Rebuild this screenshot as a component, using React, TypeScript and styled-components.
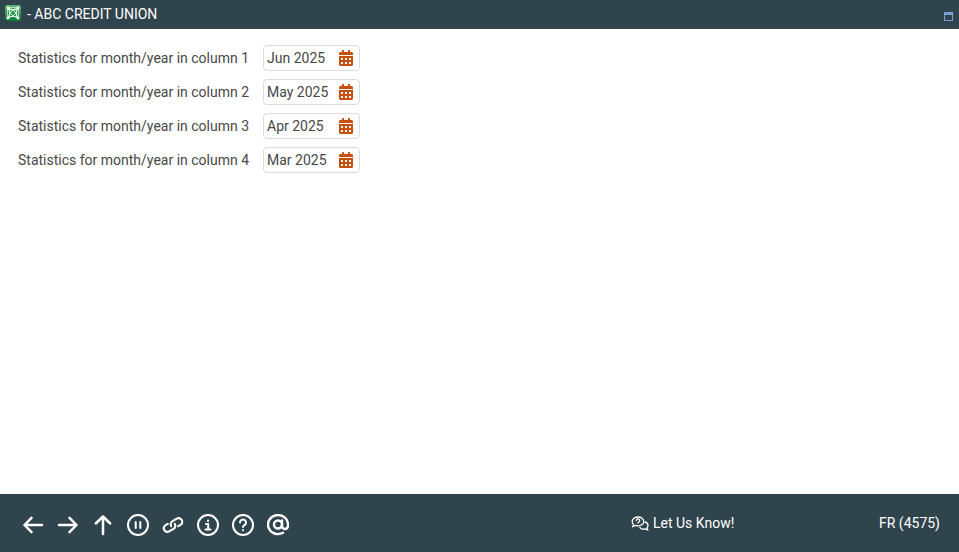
import React, { FC } from "react";
import styled, { createGlobalStyle } from "styled-components";
import { FaCalendarAlt } from "react-icons/fa";

const GlobalStyle = createGlobalStyle`
  html, body { margin: 0; padding: 0; height: 100%; background: #fff; }
  #root { height: 100%; }
  * { box-sizing: border-box; }
`;

const Page = styled.div`
  height: 552px;
  display: flex;
  flex-direction: column;
  font-family: Roboto, "Liberation Sans", sans-serif;
  overflow: hidden;
`;

const TitleBar = styled.header`
  height: 29px;
  flex: none;
  background: #30444e;
  color: #fff;
  display: flex;
  align-items: center;
  padding: 0 6px 2px 5px;
  font-size: 14px;
  font-weight: 400;
`;

const LogoMark = styled.svg`
  width: 16px;
  height: 16px;
  margin-bottom: 2px;
`;

const TitleText = styled.span`
  margin-left: 6px;
  flex: 1;
`;

const WindowButton = styled.span`
  width: 9px;
  height: 9px;
  margin: 6px 0 0;
  border: 1px solid #7f9fd0;
  border-top-width: 3px;
`;

const Content = styled.main`
  flex: 1;
  padding: 16px 18px;
  display: flex;
  flex-direction: column;
  gap: 8px;
`;

const Row = styled.div`
  display: flex;
  align-items: center;
  height: 26px;
`;

const Label = styled.label`
  width: 245px;
  font-size: 14px;
  color: #474747;
`;

const DateField = styled.div`
  width: 97px;
  height: 26px;
  border: 1px solid #dcdcdc;
  border-radius: 4px;
  display: flex;
  align-items: center;
  justify-content: space-between;
  padding: 0 6px 0 3px;
  font-size: 14px;
  color: #474747;
  svg { color: #c8500f; width: 14px; height: 16px; }
`;

const Footer = styled.footer`
  height: 58px;
  flex: none;
  background: #30444e;
  color: #fff;
  display: flex;
  align-items: center;
  padding: 0 19px 0 22px;
  font-size: 14px;
  font-weight: 400;
`;

const Tools = styled.nav`
  display: flex;
  gap: 13px;
  width: 609px;
  margin-top: 4px;
`;

const ToolIcon = styled.svg<{ $weight?: number }>`
  width: 22px;
  height: 22px;
  fill: none;
  stroke: #fff;
  stroke-width: ${(p) => p.$weight ?? 2};
  stroke-linecap: round;
  stroke-linejoin: round;
`;

const Feedback = styled.div`
  display: flex;
  align-items: center;
  gap: 4px;
  flex: 1;
  svg { width: 18px; height: 15px; fill: none; stroke: #fff; stroke-width: 1.3; stroke-linecap: round; }
`;

const User = styled.span``;

const rows = [
  ["Statistics for month/year in column 1", "Jun 2025"],
  ["Statistics for month/year in column 2", "May 2025"],
  ["Statistics for month/year in column 3", "Apr 2025"],
  ["Statistics for month/year in column 4", "Mar 2025"],
];

const Logo = () => (
  <LogoMark viewBox="0 0 16 16" aria-hidden="true">
    <defs>
      <linearGradient id="lg" x1="0" y1="0" x2="0" y2="1">
        <stop offset="0" stopColor="#58b872" />
        <stop offset="1" stopColor="#0b7a35" />
      </linearGradient>
    </defs>
    <rect width="16" height="16" rx="2" fill="url(#lg)" />
    <g stroke="#f0faf2" strokeWidth="1.100" fill="none">
      <path d="M3 3 Q8 6.500 13 3 Q9.500 8 13 13 Q8 9.500 3 13 Q6.500 8 3 3Z" />
      <path d="M3 3 Q1.500 8 3 13 M13 3 Q14.500 8 13 13 M3 3 Q8 1.500 13 3" strokeWidth="0.700" />
      <path d="M8 5 L11 8 L8 11 L5 8Z" strokeWidth="0.800" />
    </g>
    <g fill="#ffffff">
      <circle cx="3" cy="3" r="1.400" />
      <circle cx="13" cy="3" r="1.400" />
      <circle cx="3" cy="13" r="1.400" />
      <circle cx="13" cy="13" r="1.400" />
    </g>
  </LogoMark>
);

const App: FC = () => (
  <Page>
    <GlobalStyle />
    <TitleBar>
      <Logo />
      <TitleText>- ABC CREDIT UNION</TitleText>
      <WindowButton />
    </TitleBar>
    <Content>
      {rows.map(([label, value]) => (
        <Row key={label}>
          <Label>{label}</Label>
          <DateField>
            {value}
            <FaCalendarAlt />
          </DateField>
        </Row>
      ))}
    </Content>
    <Footer>
      <Tools>
        <ToolIcon $weight={2.5} viewBox="0 0 22 22"><path d="M20 11H2.500M9.500 3.800L2.500 11l7 7.200" /></ToolIcon>
        <ToolIcon $weight={2.5} viewBox="0 0 22 22"><path d="M2 11h17.500M12.500 3.800l7 7.200-7 7.200" /></ToolIcon>
        <ToolIcon $weight={2.5} viewBox="0 0 22 22"><path d="M11 20V2.500M3.800 9.500L11 2.500l7.200 7" /></ToolIcon>
        <ToolIcon viewBox="0 0 22 22"><circle cx="11" cy="11" r="10" /><path d="M8.700 8v6M13.300 8v6" /></ToolIcon>
        <ToolIcon $weight={2.2} viewBox="0 0 22 22">
          <g transform="rotate(-30 11 11)">
            <path d="M7 7.400H4.500a3.600 3.600 0 0 0 0 7.200h5a3.600 3.600 0 0 0 3.600-3.600" />
            <path d="M15 14.600h2.500a3.600 3.600 0 0 0 0-7.200h-5a3.600 3.600 0 0 0-3.600 3.600" />
          </g>
        </ToolIcon>
        <ToolIcon viewBox="0 0 22 22"><circle cx="11" cy="11" r="10" /><path d="M9 10h2.200v5M8.500 15.500h5M11 6.500v.5" /></ToolIcon>
        <ToolIcon viewBox="0 0 22 22"><circle cx="11" cy="11" r="10" /><path d="M8 8.500a3 3 0 1 1 4.500 2.600c-1 .6-1.500 1-1.500 2M11 16v.3" /></ToolIcon>
        <ToolIcon $weight={2.4} viewBox="0 0 22 22"><circle cx="11" cy="10.500" r="4" /><path d="M15 6.500v5.500a3 3 0 0 0 6 0v-1.500a10 9.500 0 1 0-5 8.300" /></ToolIcon>
      </Tools>
      <Feedback>
        <svg viewBox="0 0 18 15" aria-hidden="true">
          <path d="M7 1c-3.200 0-5.800 2-5.800 4.500 0 1.100.5 2.100 1.300 2.900L1.800 10.500l2.600-1.100c.8.300 1.700.5 2.600.5 3.200 0 5.800-2 5.800-4.400S10.200 1 7 1z" />
          <path d="M5.300 4.500a1.700 1.700 0 1 1 2.500 1.500c-.5.300-.8.500-.8 1" />
          <path d="M14 6c1.800.5 3 1.900 3 3.500 0 .9-.4 1.800-1 2.400l.6 2-2.300-1c-2 .6-4.400.1-5.500-1.500" />
        </svg>
        Let Us Know!
      </Feedback>
      <User>FR (4575)</User>
    </Footer>
  </Page>
);

export default App;
